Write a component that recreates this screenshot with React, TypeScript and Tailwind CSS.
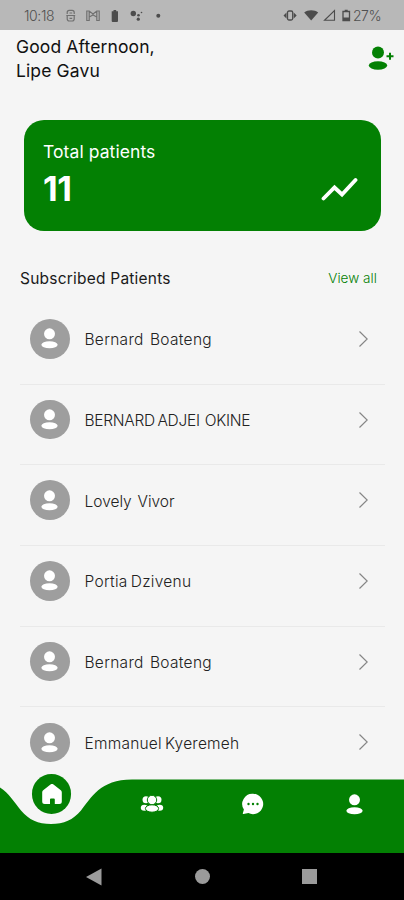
import { ReactNode } from 'react';

interface Patient {
  id: number;
  name: string;
  tracking: string;
}

const patients: Patient[] = [
  { id: 1, name: 'Bernard  Boateng', tracking: 'tracking-[0.3px]' },
  { id: 2, name: 'BERNARD ADJEI  OKINE', tracking: 'tracking-[-0.28px]' },
  { id: 3, name: 'Lovely  Vivor', tracking: 'tracking-[0px]' },
  { id: 4, name: 'Portia Dzivenu', tracking: 'tracking-[0.28px]' },
  { id: 5, name: 'Bernard  Boateng', tracking: 'tracking-[0.3px]' },
  { id: 6, name: 'Emmanuel Kyeremeh', tracking: 'tracking-[0.22px]' },
];

function PersonIcon({ className }: { className?: string }) {
  return (
    <svg viewBox="0 0 18 22" fill="currentColor" className={className}>
      <circle cx="9" cy="6" r="5.8" />
      <ellipse cx="9" cy="17.6" rx="8.6" ry="3.8" />
    </svg>
  );
}

function StatusBar() {
  return (
    <div className="flex h-[30px] shrink-0 items-center bg-[#b8b8b8] pt-0.5 text-[#4c4c4c]">
      <span className="ml-6 w-[42px] text-[14px] font-light leading-none tracking-[-0.4px] text-[#505050]">10:18</span>
      <svg viewBox="0 0 100 16" className="h-4 w-[100px]" fill="none" stroke="currentColor">
        <g stroke="#707070" strokeWidth="1.2">
          <path d="M1.2 6V4.500c0-1.300 1-2.200 2-2.200h3c1 0 2 .9 2 2.200V6M.3 7.500h8.900M1.200 7.500v3.300c0 1.300 1 2.200 2 2.200h3c1 0 2-.9 2-2.200V7.500M3.500 5h2.700M3.500 10.300h2.700" />
          <path d="M20.800 3v9.500h2.400V9l3.800-2 3.800 2v3.500h2.400V3h-2.400L27 6 23.200 3zM23.200 3v6M30.800 3v6" />
        </g>
        <path d="M45.700 3.200h1.800V2h2.700v1.200H52V13a1 1 0 0 1-1 1h-4.300a1 1 0 0 1-1-1z" fill="currentColor" stroke="none" />
        <g fill="currentColor" stroke="none">
          <circle cx="67.300" cy="5.500" r="2.700" />
          <circle cx="72.500" cy="7.300" r="1.300" />
          <circle cx="72.300" cy="11.200" r="1.600" />
          <circle cx="75.500" cy="4.500" r=".8" />
          <circle cx="92.300" cy="7.800" r="2" />
        </g>
      </svg>
      <svg viewBox="0 0 70 16" className="ml-auto h-4 w-[70px]" fill="none" stroke="currentColor">
        <path d="M3.500 4.500.5 7.500l3 3zM10.700 4.500l3 3-3 3z" fill="currentColor" stroke="none" />
        <rect x="4.500" y="3" width="5.200" height="9" rx="1.500" strokeWidth="1.300" />
        <path d="M28.200 12.500 21.200 4.500c3.500-3 10.500-3 14 0z" fill="currentColor" stroke="none" />
        <path d="M41.500 12.300h10V2.500z" strokeWidth="1.100" />
        <path d="M60 3.500h6.500v9H60zM61.700 2.300h3" strokeWidth="1.300" />
        <path d="M60 9.500h6.500v3H60z" fill="currentColor" stroke="none" />
      </svg>
      <span className="mr-[23px] text-[14px] font-light leading-none tracking-[-0.5px] text-[#505050]">27%</span>
    </div>
  );
}

function Header() {
  return (
    <header className="flex h-[90px] shrink-0 items-start justify-between pl-4 pr-[10px] pt-[5px]">
      <h1 className="text-[17.5px] font-normal leading-6 tracking-[0.12px] text-[#111]">
        Good Afternoon,
        <br />
        Lipe Gavu
      </h1>
      <svg viewBox="0 0 26 25" className="mt-[10px] h-[25px] w-[26px] text-[#038003]" fill="currentColor">
        <circle cx="10" cy="7.500" r="6" />
        <ellipse cx="10" cy="20.500" rx="9.200" ry="4.200" />
        <path d="M22 7.700v7M18.500 11.200h7" stroke="currentColor" strokeWidth="2" />
      </svg>
    </header>
  );
}

function TotalCard() {
  return (
    <section className="ml-6 mr-[23px] flex h-[111px] shrink-0 justify-between rounded-[20px] bg-[#038003] pl-[19px] pr-[23px] text-white">
      <div className="pt-5">
        <p className="text-[17.5px] leading-6 tracking-[0.08px]">Total patients</p>
        <p className="mt-[6px] text-[34px] font-bold leading-[38px] tracking-[-0.5px]">11</p>
      </div>
      <svg viewBox="0 0 38 24" className="mt-[57px] h-6 w-[38px]" fill="none" stroke="currentColor" strokeWidth="3.800" strokeLinecap="round" strokeLinejoin="miter">
        <path d="M3.500 21.500 14.500 10.500 22 17.500 35.500 3" />
      </svg>
    </section>
  );
}

function PatientRow({ patient }: { patient: Patient }) {
  return (
    <li className="flex h-[80.7px] shrink-0 items-center border-b border-[#e9e9e9] pb-[10px] pl-[10px] pr-[17px] last:border-transparent">
      <span className="flex h-[39.500px] w-[39.500px] items-center justify-center rounded-full bg-[#9e9e9e] text-white">
        <PersonIcon className="h-[21px] w-[17px]" />
      </span>
      <span
        className={`ml-[15px] whitespace-pre pt-0.5 text-[15.5px] font-light [word-spacing:-1.5px] text-[#222] ${patient.tracking}`}
      >
        {patient.name}
      </span>
      <svg viewBox="0 0 9 16" className="ml-auto h-4 w-[9px]" fill="none" stroke="#858585" strokeWidth="1.200">
        <path d="m.5.5 7.700 7.500-7.700 7.500" />
      </svg>
    </li>
  );
}

function NavItem({ children }: { children: ReactNode }) {
  return <button className="flex h-[50px] flex-1 items-center justify-center">{children}</button>;
}

function BottomNav() {
  return (
    <nav className="absolute inset-x-0 bottom-[47px] h-[74px] text-white">
      <svg viewBox="0 0 404 74" className="absolute inset-0 h-[74px] w-[404px]">
        <path
          d="M0 8.500C9 14 14 23 21 31.500C29 41 38 45 51 45C64 45 73 41 81 31.500C91 19 100 0.500 132 0.500H404V74H0Z"
          fill="#038003"
        />
      </svg>
      <div className="relative flex">
        <NavItem>
          <span className="-mt-5 ml-0.5 flex h-[39.500px] w-[39.500px] items-center justify-center rounded-full bg-[#038003]">
            <svg viewBox="0 0 20 20" className="h-5 w-5" fill="currentColor">
              <path d="M8.500.5a2.300 2.300 0 0 1 3 0l7 5.500c.8.600 1.300 1.500 1.300 2.500v9a2.500 2.500 0 0 1-2.500 2.500h-4.500v-4.500a1 1 0 0 0-1-1H9a1 1 0 0 0-1 1V20H2.700A2.500 2.500 0 0 1 .2 17.500v-9C.2 7.500.7 6.600 1.500 6z" />
            </svg>
          </span>
        </NavItem>
        <NavItem>
          <svg viewBox="0 0 24 18" className="h-[18px] w-6" fill="currentColor">
            <circle cx="6" cy="4.700" r="3.500" />
            <circle cx="18" cy="4.700" r="3.500" />
            <ellipse cx="4.300" cy="12.700" rx="3.500" ry="3" />
            <ellipse cx="19.700" cy="12.700" rx="3.500" ry="3" />
            <g stroke="#038003" strokeWidth="1">
              <circle cx="12" cy="5" r="4.700" />
              <ellipse cx="12" cy="13.500" rx="6.600" ry="3.700" />
            </g>
          </svg>
        </NavItem>
        <NavItem>
          <svg viewBox="0 0 22 22" className="h-[22px] w-[22px]" fill="currentColor">
            <path d="M11 .8a10.200 10.200 0 1 1-4.600 19.300l-4.800 1c-.7.100-1-.4-.7-1l1-3.500A10.200 10.200 0 0 1 11 .8z" />
            <g fill="#038003">
              <circle cx="6.500" cy="11" r="1.200" />
              <circle cx="11" cy="11" r="1.200" />
              <circle cx="15.500" cy="11" r="1.200" />
            </g>
          </svg>
        </NavItem>
        <NavItem>
          <PersonIcon className="ml-0.5 h-[21px] w-[17px]" />
        </NavItem>
      </div>
    </nav>
  );
}

function SystemBar() {
  return (
    <div className="absolute inset-x-0 bottom-0 flex h-[47px] items-center justify-between bg-black pl-[86px] pr-[87px] text-[#9b9b9b]">
      <svg viewBox="0 0 16 18" className="h-[18px] w-4" fill="currentColor">
        <path d="M0 9 15.500.500v17z" />
      </svg>
      <span className="h-[15px] w-[15px] rounded-full bg-[#9b9b9b]" />
      <span className="h-[15px] w-[15px] bg-[#9b9b9b]" />
    </div>
  );
}

export default function App() {
  return (
    <div className="relative flex h-[900px] w-[404px] flex-col overflow-hidden bg-[#f5f5f5] font-['Inter','Noto_Sans',sans-serif]">
      <StatusBar />
      <Header />
      <TotalCard />
      <div className="flex h-[73px] shrink-0 items-center justify-between pl-5 pr-[27px] pt-[22px]">
        <h2 className="text-[15.5px] font-normal tracking-[0.22px] text-[#1a1a1a]">Subscribed Patients</h2>
        <a className="text-[13.5px] font-light tracking-[0.05px] text-[#038003]">View all</a>
      </div>
      <ul className="flex flex-col pl-5 pr-[19px]">
        {patients.map((patient) => (
          <PatientRow key={patient.id} patient={patient} />
        ))}
      </ul>
      <BottomNav />
      <SystemBar />
    </div>
  );
}
